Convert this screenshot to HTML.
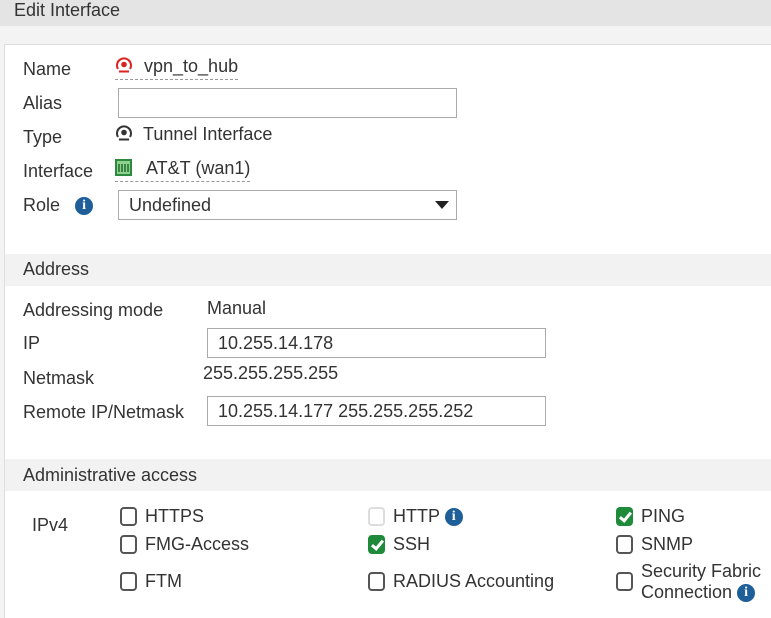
<!DOCTYPE html><html><head><style>
body{margin:0;width:771px;height:617px;overflow:hidden;background:#f3f3f3;font-family:"Liberation Sans",sans-serif;font-size:18px;color:#333;position:relative}
.a{position:absolute;white-space:nowrap}
.hdr{position:absolute;left:0;top:0;width:771px;height:26px;background:#e4e4e4}
.panel{position:absolute;left:4px;top:44px;width:767px;height:573px;background:#fff;border-left:1px solid #ddd;border-top:1px solid #ddd}
.sec{position:absolute;left:5px;width:766px;height:32px;background:#f2f2f2}
.inp{position:absolute;border:1px solid #aaa;background:#fff;height:28px;box-sizing:border-box}
.cb{position:absolute;width:17px;height:19px;border:2px solid #555;border-radius:4px;box-sizing:border-box;background:#fff}
.ck{background:#1f8a3a;border-color:#1f8a3a}
.ck:after{content:"";position:absolute;left:4px;top:1px;width:4px;height:9px;border:solid #fff;border-width:0 3px 3px 0;transform:rotate(40deg)}
.info{display:inline-block;width:18px;height:18px;border-radius:50%;background:#1e5f99;color:#fff;font-weight:bold;font-size:14px;text-align:center;line-height:18px;font-family:"Liberation Serif",serif;vertical-align:2px}
.ul{border-bottom:1px dashed #999}
svg{vertical-align:-2px}
</style></head><body>
<div class="hdr"></div><div class="a" style="left:14px;top:0px">Edit Interface</div>
<div class="panel"></div>
<div class="a" style="left:23px;top:59px">Name</div>
<div class="a ul" style="left:115px;top:56px;padding-bottom:2px"><svg width="18" height="18" viewBox="0 0 18 18" style="margin-right:11px"><path d="M3 13 A7 7 0 1 1 15 13" fill="none" stroke="#d22" stroke-width="2"/><circle cx="9" cy="8.5" r="2.8" fill="#d22"/><path d="M4 15.5H14" stroke="#d22" stroke-width="2"/></svg>vpn_to_hub</div>
<div class="a" style="left:23px;top:93px">Alias</div>
<div class="inp" style="left:118px;top:88px;width:339px;height:30px"></div>
<div class="a" style="left:23px;top:127px">Type</div>
<div class="a" style="left:115px;top:124px"><svg width="18" height="18" viewBox="0 0 18 18" style="margin-right:10px"><path d="M3 13 A7 7 0 1 1 15 13" fill="none" stroke="#333" stroke-width="2"/><circle cx="9" cy="8.5" r="2.8" fill="#333"/><path d="M4 15.5H14" stroke="#333" stroke-width="2"/></svg>Tunnel Interface</div>
<div class="a" style="left:23px;top:161px">Interface</div>
<div class="a ul" style="left:115px;top:158px;padding-bottom:2px"><svg width="17" height="17" viewBox="0 0 17 17" style="margin-right:14px"><rect x="1" y="1" width="15" height="15" fill="#8fd08f" stroke="#2c8a3c" stroke-width="2"/><path d="M4 5v8M7 5v8M10 5v8M13 5v8" stroke="#1d6e2c" stroke-width="1.5"/></svg>AT&amp;T (wan1)</div>
<div class="a" style="left:23px;top:195px">Role <span class="info" style="margin-left:10px">i</span></div>
<div class="inp" style="left:118px;top:190px;width:339px;height:30px"></div>
<div class="a" style="left:129px;top:195px">Undefined</div>
<div class="a" style="left:435px;top:201px;width:0;height:0;border-left:7px solid transparent;border-right:7px solid transparent;border-top:8px solid #222"></div>
<div class="sec" style="top:254px"></div><div class="a" style="left:23px;top:259px">Address</div>
<div class="a" style="left:23px;top:300px">Addressing mode</div>
<div class="a" style="left:207px;top:298px">Manual</div>
<div class="a" style="left:23px;top:333px">IP</div>
<div class="inp" style="left:207px;top:328px;width:339px;height:30px"></div>
<div class="a" style="left:218px;top:333px">10.255.14.178</div>
<div class="a" style="left:23px;top:368px">Netmask</div>
<div class="a" style="left:203px;top:363px">255.255.255.255</div>
<div class="a" style="left:23px;top:402px">Remote IP/Netmask</div>
<div class="inp" style="left:207px;top:396px;width:339px;height:30px"></div>
<div class="a" style="left:218px;top:401px">10.255.14.177 255.255.255.252</div>
<div class="sec" style="top:459px"></div><div class="a" style="left:23px;top:465px">Administrative access</div>
<div class="a" style="left:32px;top:515px">IPv4</div>
<div class="cb" style="left:120px;top:507px"></div><div class="a" style="left:145px;top:506px">HTTPS</div>
<div class="cb" style="left:120px;top:535px"></div><div class="a" style="left:145px;top:534px">FMG-Access</div>
<div class="cb" style="left:120px;top:572px"></div><div class="a" style="left:145px;top:571px">FTM</div>
<div class="cb" style="left:368px;top:507px;border-color:#ddd"></div><div class="a" style="left:393px;top:506px">HTTP <span class="info">i</span></div>
<div class="cb ck" style="left:368px;top:535px"></div><div class="a" style="left:393px;top:534px">SSH</div>
<div class="cb" style="left:368px;top:572px"></div><div class="a" style="left:393px;top:571px">RADIUS Accounting</div>
<div class="cb ck" style="left:616px;top:507px"></div><div class="a" style="left:641px;top:506px">PING</div>
<div class="cb" style="left:616px;top:535px"></div><div class="a" style="left:641px;top:534px">SNMP</div>
<div class="cb" style="left:616px;top:572px"></div><div class="a" style="left:641px;top:561px;line-height:21px">Security Fabric<br>Connection <span class="info">i</span></div>
</body></html>
